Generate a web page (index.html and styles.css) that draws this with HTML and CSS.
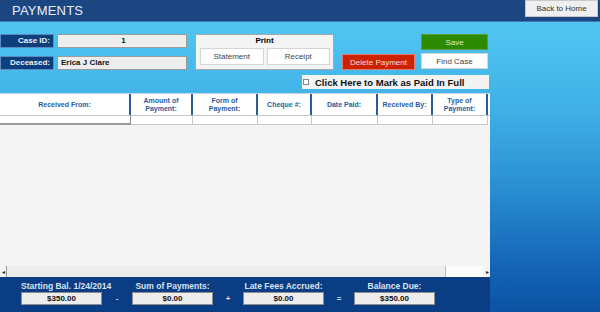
FILE: index.html
```html
<!DOCTYPE html>
<html lang="en">
<head>
    <meta charset="UTF-8">
    <title>Payments</title>
    <link rel="stylesheet" href="styles.css">
</head>
<body>
    <div class="topbar">
        <h1>PAYMENTS</h1>
        <button class="home-btn">Back to Home</button>
    </div>

    <div class="page">
        <div class="controls">
            <div class="case-fields">
                <div class="field-row">
                    <span class="label">Case ID:</span>
                    <span class="input center">1</span>
                </div>
                <div class="field-row">
                    <span class="label">Deceased:</span>
                    <span class="input">Erica J Clare</span>
                </div>
            </div>

            <div class="print-box">
                <div class="print-title">Print</div>
                <div class="print-buttons">
                    <button class="plain-btn">Statement</button>
                    <button class="plain-btn">Receipt</button>
                </div>
            </div>

            <button class="delete-btn">Delete Payment</button>

            <div class="save-col">
                <button class="save-btn">Save</button>
                <button class="plain-btn find-btn">Find Case</button>
            </div>
        </div>

        <label class="paid-row">
            <span class="checkbox"></span>
            Click Here to Mark as Paid In Full
        </label>

        <div class="grid">
            <div class="grid-head">
                <div>Received From:</div>
                <div>Amount of<br>Payment:</div>
                <div>Form of<br>Payment:</div>
                <div>Cheque #:</div>
                <div>Date Paid:</div>
                <div>Received By:</div>
                <div>Type of<br>Payment:</div>
            </div>
            <div class="grid-row">
                <div class="first"></div>
                <div></div>
                <div></div>
                <div></div>
                <div></div>
                <div></div>
                <div></div>
            </div>
            <div class="grid-body"></div>
            <div class="hscroll">
                <span class="arrow">&#9666;</span>
                <span class="track"></span>
                <span class="spare"></span>
                <span class="arrow">&#9656;</span>
            </div>
        </div>

        <div class="totals">
            <div class="total">
                <div class="total-label">Starting Bal. 1/24/2014</div>
                <div class="total-value">$350.00</div>
            </div>
            <div class="op">-</div>
            <div class="total">
                <div class="total-label">Sum of Payments:</div>
                <div class="total-value">$0.00</div>
            </div>
            <div class="op">+</div>
            <div class="total">
                <div class="total-label">Late Fees Accrued:</div>
                <div class="total-value">$0.00</div>
            </div>
            <div class="op">=</div>
            <div class="total">
                <div class="total-label">Balance Due:</div>
                <div class="total-value">$350.00</div>
            </div>
        </div>
    </div>
</body>
</html>
```

FILE: styles.css
```css
* {
    box-sizing: border-box;
}

body {
    margin: 0;
    width: 600px;
    height: 312px;
    overflow: hidden;
    font-family: "Liberation Sans", Arial, sans-serif;
    background: linear-gradient(to bottom, #56cbf5 0%, #3fb0e6 35%, #2a8fd2 60%, #1465b6 85%, #0b52a2 100%);
}

button {
    font-family: inherit;
    cursor: pointer;
}

.topbar {
    display: flex;
    justify-content: space-between;
    height: 22px;
    background-color: #1b4682;
    border-bottom: 1px solid #3d79b5;
}

.topbar h1 {
    margin: 0;
    padding: 3px 0 0 12px;
    font-size: 13px;
    font-weight: normal;
    color: #e6eef8;
    letter-spacing: 0.2px;
}

.home-btn {
    width: 73px;
    height: 17px;
    margin-right: 2px;
    padding: 0;
    border: 1px solid #c8c8c8;
    background-color: #efefef;
    font-size: 8px;
    color: #333;
}

.page {
    width: 490px;
}

/* top controls */
.controls {
    display: flex;
    padding-top: 12px;
}

.case-fields {
    display: flex;
    flex-direction: column;
    gap: 8px;
}

.field-row {
    display: flex;
    gap: 3px;
    height: 14px;
}

.label {
    width: 54px;
    padding-right: 3px;
    background-color: #0d3f7c;
    border: 1px solid #5b8bc0;
    color: #e8eef6;
    font-size: 8px;
    font-weight: bold;
    line-height: 12px;
    text-align: right;
}

.input {
    width: 130px;
    padding-left: 3px;
    background-color: #ededed;
    border: 1px solid #9a9a9a;
    font-size: 8px;
    font-weight: bold;
    line-height: 12px;
    color: #111;
}

.input.center {
    text-align: center;
}

.print-box {
    width: 139px;
    height: 36px;
    margin-left: 8px;
    padding: 0 3px;
    background-color: #f4f4f4;
    border: 1px solid #a8a8a8;
}

.print-title {
    height: 13px;
    font-size: 8px;
    font-weight: bold;
    line-height: 11px;
    text-align: center;
}

.print-buttons {
    display: flex;
    gap: 3px;
    padding-left: 1px;
}

.plain-btn {
    height: 17px;
    padding: 0;
    border: 1px solid #d4d4d4;
    background-color: #fff;
    font-size: 8px;
    color: #444;
}

.print-buttons .plain-btn {
    width: 65px;
}

.delete-btn {
    align-self: flex-end;
    width: 73px;
    height: 16px;
    margin-left: 8px;
    padding: 0;
    border: 1px solid #e07b6b;
    background-color: #cc2200;
    font-size: 8px;
    color: #f6dcd6;
}

.save-col {
    display: flex;
    flex-direction: column;
    gap: 3px;
    margin-left: 6px;
}

.save-btn {
    width: 67px;
    height: 16px;
    padding: 0;
    border: 1px solid #5aa02e;
    background-color: #2e8a00;
    font-size: 8px;
    color: #d6edc8;
}

.find-btn {
    width: 67px;
    height: 16px;
}

.paid-row {
    display: flex;
    align-items: center;
    gap: 6px;
    width: 187px;
    height: 14px;
    margin: 5px 0 0 302px;
    padding-left: 1px;
    background-color: #f3f3f3;
    font-size: 9.5px;
    font-weight: bold;
    color: #111;
}

.checkbox {
    width: 6px;
    height: 6px;
    border: 1px solid #888;
    background-color: #fff;
}

/* payments grid */
.grid {
    margin-top: 4px;
    background-color: #f4f4f4;
}

.grid-head,
.grid-row {
    display: grid;
    grid-template-columns: 131px 62px 65px 54px 66px 55px 55px;
}

.grid-head {
    height: 22px;
    background-color: #fff;
    border-top: 1px solid #c9d4e2;
}

.grid-head div {
    display: flex;
    align-items: center;
    justify-content: center;
    border-right: 2px solid #2d5a98;
    font-size: 7px;
    font-weight: bold;
    line-height: 8px;
    text-align: center;
    color: #2c5c9c;
}

.grid-row {
    height: 10px;
    background-color: #fff;
    border-top: 1px solid #c4c4c4;
}

.grid-row div {
    border-right: 1px solid #c8c8c8;
    border-bottom: 1px solid #c8c8c8;
}

.grid-row .first {
    border-right-color: #8a8a8a;
    border-bottom: 2px solid #9a9a9a;
}

.grid-body {
    height: 141px;
}

.hscroll {
    display: flex;
    align-items: center;
    height: 11px;
    font-size: 6px;
    color: #222;
}

.hscroll .arrow {
    width: 6px;
    text-align: center;
}

.track {
    flex: 1;
    align-self: stretch;
    background-color: #ececec;
    border-left: 1px solid #999;
    border-right: 1px solid #bbb;
}

.spare {
    width: 38px;
    align-self: stretch;
    background-color: #fbfbfb;
}

/* totals footer */
.totals {
    display: flex;
    height: 35px;
    padding: 5px 0 0 21px;
    background-color: #0a3d84;
}

.total {
    width: 81px;
}

.total-label {
    height: 9px;
    font-size: 8.5px;
    font-weight: bold;
    line-height: 9px;
    text-align: center;
    color: #d9e3f1;
    white-space: nowrap;
}

.total-value {
    height: 13px;
    margin-top: 1px;
    background-color: #ededed;
    border: 1px solid #8c8c8c;
    font-size: 8px;
    font-weight: bold;
    line-height: 11px;
    text-align: center;
    color: #111;
}

.op {
    width: 30px;
    padding-top: 12px;
    font-size: 8px;
    font-weight: bold;
    text-align: center;
    color: #d9e3f1;
}
```
